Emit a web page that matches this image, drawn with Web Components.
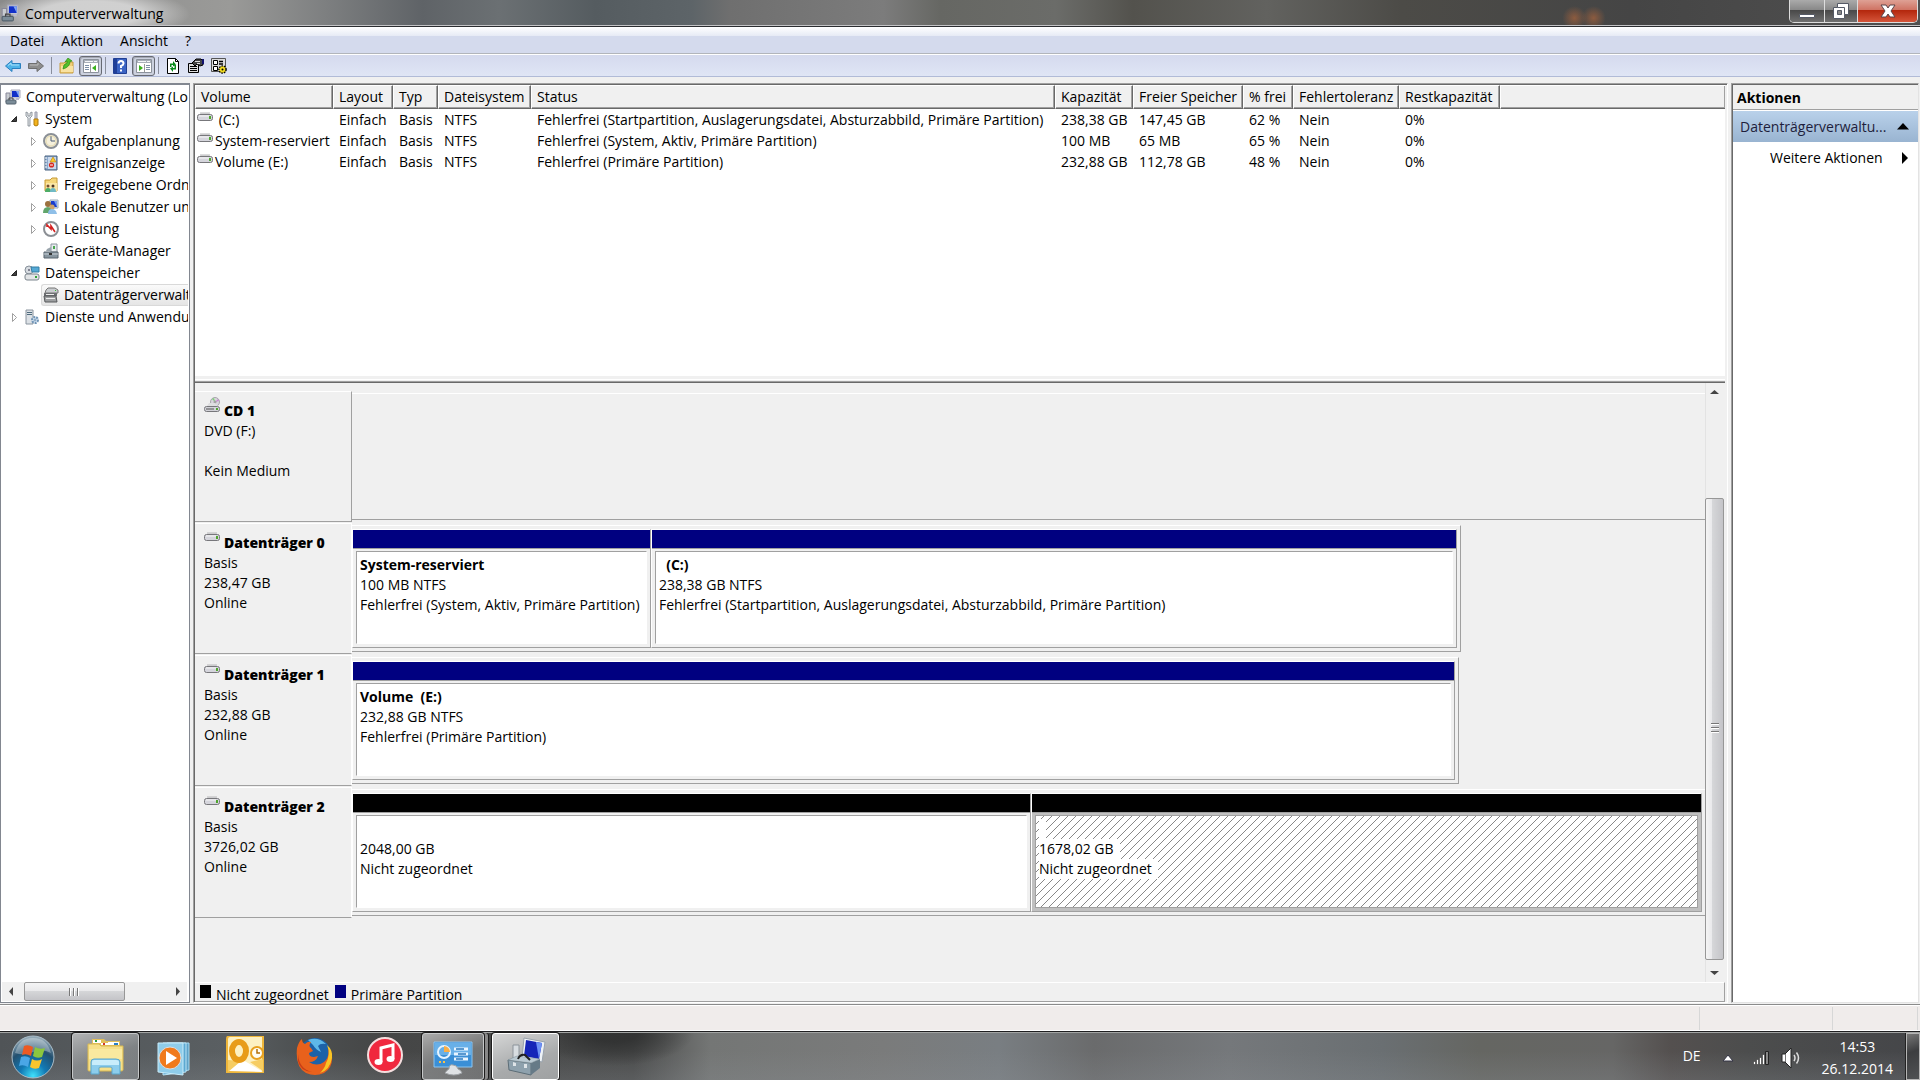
<!DOCTYPE html>
<html lang="de">
<head>
<meta charset="utf-8">
<title>Computerverwaltung</title>
<style>
  html, body {
    margin: 0;
    height: 100%;
  }

  body {
    --face: #f0f0f0;
    --shadow: #a0a0a0;
    --dark: #696969;
    --navy: #000080;
    font: 14px/20px "Open Sans", "Noto Sans", sans-serif;
    color: #000;
  }
</style>
</head>
<body>
<management-console></management-console>

<script>
const ICONS = {
  computer: `<path d="M1 4h4v9H1z" fill="#c8ccd0" stroke="#889"/><path d="M6 1h9v8H6z" fill="#dde3ea" stroke="#aab"/><path d="M7 2h7v6H7z" fill="#1230c8"/><path d="M11 2h3v6z" fill="#7fa4f4"/><rect x="1" y="11" width="10" height="4" rx="1" fill="#7b8c98" stroke="#55636e"/><path d="M4 11V9h4v2" fill="none" stroke="#444"/><path d="M11 9h3v2h-3z" fill="#bbc"/>`,
  tools: `<path d="M2 1v4l2 2v8h2V7l2-2V1L6 2v3H4V2z" fill="#e4e8ec" stroke="#7d878e" stroke-width=".8"/><path d="M11 1h2v7h-2z" fill="#ccd2d8" stroke="#99a"/><path d="M10 8h4v6q-2 2-4 0z" fill="#f2b21c" stroke="#b17c0c"/>`,
  clock: `<circle cx="8" cy="8" r="7" fill="#f5f0dc" stroke="#8b9096" stroke-width="2"/><path d="M8 3v5h4" fill="none" stroke="#4a5c78"/><circle cx="8" cy="8" r="5" fill="none" stroke="#d9c98f" stroke-width=".6"/>`,
  eventlog: `<path d="M2 1h12v14H2z" fill="#8ca9cc" stroke="#46617f"/><path d="M5 2h8v12H5z" fill="#c9d8ec"/><path d="M2 3h2M2 6h2M2 9h2M2 12h2" stroke="#fff"/><path d="m10 2 3 5H7z" fill="#fbc92c" stroke="#b98000" stroke-width=".6"/><circle cx="8.500" cy="10" r="2.600" fill="#d8271c"/><path d="M7 10h3" stroke="#fff"/>`,
  shared: `<path d="M2 3h5l2-2h5v13H2z" fill="#f6d77b" stroke="#c79a35"/><path d="M3 6h11v8H3z" fill="#fbe6a4"/><circle cx="5" cy="9" r="1.500" fill="#795030"/><circle cx="10" cy="9" r="1.500" fill="#4d3524"/><path d="M2 15q0-4 3-4t3 4z" fill="#4dad67"/><path d="M7 15q0-4 3-4t3 4z" fill="#6fb9c4"/>`,
  users: `<path d="M7 1h8v8H7z" fill="#dce4ee" stroke="#9ab"/><path d="M8 2h6v6H8z" fill="#1a3ccc"/><path d="M11 2h3v6z" fill="#779cf0"/><circle cx="5" cy="5" r="3" fill="#9c713f"/><circle cx="9" cy="8" r="2.600" fill="#cda36c"/><path d="M0 14q0-6 5-6 3 0 4 6z" fill="#61a56b"/><path d="M5 15q0-5 4-5t5 5z" fill="#8fbfe8"/>`,
  perf: `<circle cx="8" cy="8" r="7" fill="#fff" stroke="#8b8f94" stroke-width="2"/><path d="M4 6V4l4 4V5l4 6" fill="none" stroke="#d41f1f" stroke-width="1.600"/>`,
  device: `<path d="M8 1h6v8H8z" fill="#e7ebef" stroke="#8a949d"/><path d="M10 3h2v3h-2z" fill="#47a64b"/><path d="m4 6 4-2v4H3z" fill="#9aa5ad"/><path d="M1 9h14v6H1z" fill="#87959f" stroke="#59656e"/><path d="M1 11h14" stroke="#c8d0d6"/><path d="M6 10h3v2H6z" fill="#333"/>`,
  storage: `<circle cx="5" cy="5" r="4" fill="#d7dce1" stroke="#87909a"/><circle cx="5" cy="5" r="1" fill="#667"/><path d="M7 2h8v5H8z" fill="#55a9d5" stroke="#357ea6"/><rect x="1" y="9" width="14" height="6" rx="2" fill="#e3e5e7" stroke="#7c858d"/><path d="M11 11h2v2h-2z" fill="#31a336"/>`,
  diskmgmt: `<path d="m3 3 2-2h7l3 2v3H2z" fill="#c9cccf" stroke="#777"/><path d="M1 6h13v3H1z" fill="#6d6f72"/><path d="M3 7.500h8" stroke="#eee"/><path d="M1 9h12l1 6H2z" fill="#9d9fa1" stroke="#56585a"/><path d="M3 11.500h9" stroke="#eee"/><path d="M12 3h1v1h-1z" fill="#3b3"/>`,
  services: `<path d="M2 1h7v14H2z" fill="#dce1e6" stroke="#8a949e"/><path d="M3 3.500h5M3 5.500h5" stroke="#4e6a7c"/><circle cx="11" cy="11" r="3" fill="#d7e6f4" stroke="#6f93b5" stroke-width="2" stroke-dasharray="2 1"/><circle cx="11" cy="11" r="1" fill="#fff" stroke="#6f93b5"/>`,
  drive: `<path d="m3 5 1-1h8l1 1 2 3H1z" fill="#dedee0"/><path d="M3 4h10" stroke="#b9b9bb"/><rect x="0.500" y="5.500" width="15" height="6" rx="2" fill="#d5d5dc" stroke="#77777b"/><path d="M2 7h10" stroke="#f8f8f8"/><path d="M12 7h2v3h-2z" fill="#4fa52e"/>`,
  cdrom: `<circle cx="11" cy="5" r="4.500" fill="#d9d5dd" stroke="#a7a4ab"/><path d="m11 5-3-3 2-1z" fill="#7dd276"/><path d="m11 5 3-3 1 2z" fill="#c887d0"/><circle cx="11" cy="5" r="1" fill="#fff" stroke="#888"/><path d="m3 9 2-3h6l3 3z" fill="#dedee0"/><rect x="0.500" y="9.500" width="15" height="5" rx="2" fill="#d2d2d8" stroke="#77777b"/><path d="M2 12h8" stroke="#555"/><path d="M12 11h2v2h-2z" fill="#4fa52e"/>`,
  back: `<path d="M0.500 8 7 2.500v3h8.500v5H7v3z" fill="#4fb3e8" stroke="#2a7fbf"/><path d="M3 7.500 6 5v2h8" fill="none" stroke="#a9e0fa"/>`,
  forward: `<path d="M15.500 8 9 2.500v3H.5v5H9v3z" fill="#8d8d8d" stroke="#6e6e6e"/><path d="M2 7h8V5" fill="none" stroke="#bbb"/>`,
  upfolder: `<path d="M1 5h4l1-1h8v11H1z" fill="#f1cf7a" stroke="#c69c3e"/><path d="M2 8h12v6H2z" fill="#f9e2a0"/><path d="M4 11q0-5 4-6V3l-2 1 3-4 4 3-2 .5Q11 9 4 11z" fill="#53c02c" stroke="#2e8d16" stroke-width=".7"/>`,
  paneleft: `<path d="M.5 1.500h15v13H.5z" fill="#fff" stroke="#8c929c"/><path d="M1 2h14v3H1z" fill="#a9afb9"/><path d="M2 3.500h8M11 3.500h3" stroke="#f4f6fa"/><path d="M7.500 6v8" stroke="#999"/><path d="M2 7.500h4M2 9.500h4M2 11.500h4" stroke="#7d8fa8"/><path d="M13 7v6l-4-3z" fill="#3bb11e"/>`,
  paneright: `<path d="M.5 1.500h15v13H.5z" fill="#fff" stroke="#8c929c"/><path d="M1 2h14v3H1z" fill="#a9afb9"/><path d="M2 3.500h8M11 3.500h3" stroke="#f4f6fa"/><path d="M8.500 6v8" stroke="#999"/><path d="M10 7.500h4M10 9.500h4M10 11.500h4" stroke="#7d8fa8"/><path d="M3 7v6l4-3z" fill="#3bb11e"/>`,
  help: `<path d="M1.500.5h13v15h-13z" fill="#3a63c4" stroke="#213f93"/><path d="M2 1h3v14H2z" fill="#203f98"/><path d="M6.500 5.500Q6.500 3 9 3t2.500 2.500Q11.500 7 9 8v2" fill="none" stroke="#fff" stroke-width="2"/><path d="M8 11.500h2v2H8z" fill="#fff"/>`,
  refresh: `<path d="M2.500.5h8l3 3v12h-11z" fill="#fff" stroke="#000"/><path d="M10.500.5v3h3" fill="none" stroke="#000"/><path d="M5 9V5.500h3V3l3 3.500-3 2V7H6.500v2zM11 7v4.500H8V14l-3-3.500 3-2V10h1.500V7z" fill="#0a8a1c"/>`,
  props: `<path d="M.5 5.500h10v9H.5z" fill="#ddd" stroke="#000"/><path d="M2 8.500h7M2 10.500h7M2 12.500h7" stroke="#000"/><path d="M4 5l4-4h5l2 2v4l-3 1-3-2-2 2z" fill="#444" stroke="#000"/><path d="M7 3.500h5M9 5.500h3" stroke="#ddd"/><path d="M14 1h2v5h-2z" fill="#11116f"/>`,
  settings: `<path d="M.5.500h14v13H.5z" fill="#ddd" stroke="#555"/><path d="M2.500 2.500h4v4h-4zM2.500 8.500h4v4h-4z" fill="#fff" stroke="#000"/><path d="M8 3.500h4M8 6h4" stroke="#000" stroke-width="1.500"/><circle cx="11.500" cy="11.500" r="3.500" fill="#f3dc20" stroke="#000" stroke-width="1.600" stroke-dasharray="1.500 1"/><circle cx="11.500" cy="11.500" r="2.700" fill="#f3dc20"/><circle cx="11.500" cy="11.500" r="1" fill="#000"/>`
};

const BIG_ICONS = {
  explorer: `<path d="M6 6V3h12l2 2h14v30H6z" fill="#e2c05a"/><path d="M7 4h8v3H7zM22 6h11v3H22z" fill="#fff"/><path d="M9 4h2v2H9z" fill="#2b9c40"/><path d="M15 7h9v2h-9z" fill="#fff"/><path d="M17 7h2v2h-2z" fill="#d2372b"/><path d="M28 7h4v2h-4z" fill="#2b80c8"/><path d="M2 8h11l2 2h22v24q0 1-2 1H3q-1 0-1-1z" fill="#f6e08a" stroke="#d8b850"/><path d="M3 13h33v10H3z" fill="#fcefae" opacity=".6"/><path d="M5 38V26q0-3 3-3h22q4 0 4 3v12h-8v-6q0-1-2-1h-9q-2 0-2 1v6z" fill="#8ccdec" stroke="#5ba7cd"/><path d="M6 29v-3q0-2 2-2h22q3 0 3 2v3z" fill="#c8edfb"/>`,
  media: `<path d="M11 7h22v27l-22 4z" fill="#5fa3c8" stroke="#a9dbf1"/><path d="M7 7h23v29l-23 3z" fill="#5ca9d2" stroke="#bce4f5"/><path d="M2 7h25v32L2 36z" fill="#8fcdea" stroke="#c9ecfa"/><circle cx="14" cy="22" r="11" fill="#f07a1c" stroke="#d9dfe5"/><path d="m10 15 11 7-11 7z" fill="#fff"/>`,
  outlook: `<path d="M1 3q0-3 3-3h33v36H1z" fill="#fdf1c2" stroke="#eeb63a" stroke-width="2"/><path d="M2 35 17 24l20 12z" fill="#fff"/><path d="M2 24v12l13-11zM37 23v12L24 26z" fill="#f6cd62"/><ellipse cx="13" cy="15" rx="7" ry="9" fill="none" stroke="#e89c18" stroke-width="6"/><circle cx="31" cy="17" r="6" fill="#fffdf3" stroke="#e8a11f" stroke-width="2"/><path d="M31 13v4h3" fill="none" stroke="#b36f0a" stroke-width="1.500"/>`,
  firefox: `<g transform="translate(-2 0)"><circle cx="21" cy="18" r="16" fill="#1c62a8"/><path d="M14 4q10-4 18 4-6-1-8 2l3 6q-5-2-8-7z" fill="#5eb8e8"/><path d="M3 12q2-7 5-9 0 4 3 5 3-3 6-2-3 4 0 6l2 3-4 2q0 4 5 4l4-1q-2 6-9 6 8 5 15 0 6-5 4-15 3 3 4 9 1 12-8 17-9 4-18 0Q1 31 3 12z" fill="#e8611c"/><path d="M33 9q6 5 5 13-2 12-12 15 5-5 6-10 5-9 1-18z" fill="#f9c424"/><path d="M4 18q1 15 14 18-12-1-14-11z" fill="#c93d16"/></g>`,
  itunes: `<circle cx="19" cy="19" r="17" fill="#f0283e" stroke="#f4dede" stroke-width="2"/><path d="M15 26V12l12-3v14" fill="none" stroke="#fff" stroke-width="3"/><ellipse cx="12.500" cy="26" rx="4" ry="3" fill="#fff"/><ellipse cx="24.500" cy="23" rx="4" ry="3" fill="#fff"/>`,
  control: `<path d="M1 6h38v25H1z" fill="#3b8fd6" stroke="#8cc4ef"/><path d="M2 7h36v12H2z" fill="#68b0e8"/><circle cx="11" cy="16" r="6" fill="none" stroke="#e6f4ff" stroke-width="2"/><path d="M11 16v-6a6 6 0 0 1 6 6z" fill="#f8ae48"/><path d="M21 13h14M21 18h14M21 23h14" stroke="#eaf6ff" stroke-width="3"/><path d="M23 13h8M25 18h8M23 23h7" stroke="#2a7ac0" stroke-width="1.500"/><path d="M6 25h2v2H6zM10 25h2v2h-2z" fill="#f8c04b"/><path d="M12 37q2-3 4-4 0-5 4-4 4 0 5 4 3 1 4 4-8 4-17 0z" fill="#dfe2e5" stroke="#a0a4a8"/>`,
  compmgmt: `<path d="M7 9h6v16H7z" fill="#d8dde1" stroke="#8c949b"/><path d="m18 2 21 4-3 20-20-4z" fill="#eef2f6" stroke="#98a2ac"/><path d="m20 4 16 3-3 16-15-3z" fill="#1525b8"/><path d="m30 6 6 1-3 16z" fill="#6c92f5"/><path d="m2 24 23 3v12L3 34z" fill="#8ea1ad" stroke="#5c6d77"/><path d="m25 27 9-4v9l-9 7z" fill="#667a87"/><path d="m2 24 9-4 23 3-9 4z" fill="#bac9d2" stroke="#7b8b95" stroke-width=".5"/><path d="M12 23q2-5 7-4l5 5" fill="none" stroke="#222" stroke-width="2"/><path d="M7 26v4h3v-3zM18 28v4h3v-4z" fill="#dee4e8"/>`
};

// Shared base: every element clones its own template into an open root.
class BaseElement extends HTMLElement {
  constructor() {
    super();
    const template = document.createElement("template");
    template.innerHTML = this.constructor.markup;
    this.attachShadow({ mode: "open" });
    this.shadowRoot.appendChild(template.content.cloneNode(true));
  }

  $(selector) {
    return this.shadowRoot.querySelector(selector);
  }
}

class UiIcon extends BaseElement {
  static markup = `<style>
    :host { display: block; flex: none; width: 16px; height: 16px; white-space: normal; }
    :host([big]) { width: 40px; height: 40px; }
    svg { display: block; width: 100%; height: 100%; }
  </style>
  <svg aria-hidden="true"></svg>`;

  static get observedAttributes() {
    return ["name"];
  }

  attributeChangedCallback(attr, oldValue, newValue) {
    const big = this.hasAttribute("big");
    const svg = this.$("svg");
    svg.setAttribute("viewBox", big ? "0 0 40 40" : "0 0 16 16");
    svg.innerHTML = (big ? BIG_ICONS : ICONS)[newValue];
  }
}

class TitleBar extends BaseElement {
  static markup = `<style>
    :host {
      display: flex;
      align-items: center;
      height: 27px;
      box-sizing: border-box;
      padding-left: 1px;
      border-bottom: 1px solid #2a2c30;
      box-shadow: inset 0 -1px #c4c4c6;
      background:
        radial-gradient(ellipse 100px 26px at 90px 14px, rgba(215, 215, 215, 0.9) 50%, transparent),
        radial-gradient(ellipse 12px 12px at 82% 18px, rgba(170, 100, 60, 0.7), transparent),
        radial-gradient(ellipse 12px 12px at 83% 18px, rgba(170, 100, 60, 0.7), transparent),
        linear-gradient(90deg, #8a8a8a 0, #9a9a98 12%, #7d7f80 17%, #5f6367 22%, #6b7073 26%, #555c60 31%, #5d6468 36%, #6f6f6f 38%, #7c7c7c 46%, #666763 49%, #6b6c69 55%, #53524d 59%, #62625f 66%, #4c4b47 73%, #454545 85%, #505050);
    }
    ui-icon { width: 18px; height: 18px; }
    h1 { flex: 1; margin: 2px 0 0 6px; font: inherit; }
    .buttons {
      display: flex;
      align-self: flex-start;
      margin-right: 2px;
      border: 1px solid #ddd;
      border-top: 0;
      border-radius: 0 0 5px 5px;
      overflow: hidden;
      height: 22px;
    }
    button {
      display: grid;
      place-items: center;
      width: 35px;
      padding: 0;
      border: 0;
      border-right: 1px solid #ddd;
      background: linear-gradient(#aaa 0, #888 45%, #484848 46%, #707070);
    }
    .restore { width: 33px; }
    .close { width: 59px; border: 0; background: linear-gradient(#dea195 0, #cf7363 45%, #b3260c 46%, #d5553a); }
    svg { display: block; }
  </style>
  <ui-icon name="computer"></ui-icon>
  <h1>Computerverwaltung</h1>
  <div class="buttons">
    <button aria-label="Minimieren"><svg width="18" height="18"><path d="M1.500 12.500h15v3h-15z" fill="#fff" stroke="#555a66"/></svg></button>
    <button class="restore" aria-label="Verkleinern"><svg width="18" height="18"><path d="M5.500 1.500h11v11h-4v4h-11v-11h4z" fill="#fff" stroke="#555a66"/><path d="M5.500 5.500h7v7" fill="none" stroke="#555a66"/><path d="M5.500 8.500h4v4h-4z" fill="#888" stroke="#555a66"/></svg></button>
    <button class="close" aria-label="Schließen"><svg width="18" height="18"><path d="M2 3h5l2 3 2-3h5l-4 6 4 6h-5l-2-3-2 3H2l4-6z" fill="#fff" stroke="#5a4448"/></svg></button>
  </div>`;
}

class MenuBar extends BaseElement {
  static markup = `<style>
    :host {
      display: flex;
      gap: 17px;
      padding-left: 10px;
      height: 26px;
      border-bottom: 1px solid #b2b5bb;
      background: linear-gradient(#fff 0, #e6eaf5 9px, #d4daed 9px);
    }
    button { padding: 2px 0 0; border: 0; background: none; font: inherit; }
  </style>
  <button>Datei</button><button>Aktion</button><button>Ansicht</button><button>?</button>`;
}

class ToolBar extends BaseElement {
  static markup = `<style>
    :host {
      display: flex;
      align-items: center;
      gap: 1px;
      padding: 1px 0 0 2px;
      height: 21px;
      border-bottom: 1px solid #b1bbd7;
      background: linear-gradient(#fff 0, #fff 1px, #d5daee 1px, #dfe5f5);
    }
    button { display: grid; place-items: center; width: 22px; height: 20px; padding: 0; border: 0; background: none; }
    .pressed {
      width: 23px;
      box-sizing: border-box;
      border: 1px solid #676a73;
      border-radius: 3px;
      background: #ccd1de;
      box-shadow: inset 1px 1px #a5a9b5;
    }
    i { width: 1px; height: 17px; margin: 0 3px; background: #8a8f9c; }
    .pressed + i { margin: 0 2px; }
  </style>
  <button aria-label="Zurück"><ui-icon name="back"></ui-icon></button>
  <button aria-label="Vorwärts"><ui-icon name="forward"></ui-icon></button>
  <i></i>
  <button aria-label="Nach oben"><ui-icon name="upfolder"></ui-icon></button>
  <button class="pressed" aria-label="Konsolenstruktur"><ui-icon name="paneleft"></ui-icon></button>
  <i></i>
  <button aria-label="Hilfe"><ui-icon name="help"></ui-icon></button>
  <button class="pressed" aria-label="Aktionsbereich"><ui-icon name="paneright"></ui-icon></button>
  <i></i>
  <button aria-label="Aktualisieren"><ui-icon name="refresh"></ui-icon></button>
  <button aria-label="Eigenschaften"><ui-icon name="props"></ui-icon></button>
  <button aria-label="Einstellungen"><ui-icon name="settings"></ui-icon></button>`;
}

class TreeItem extends BaseElement {
  static markup = `<style>
    :host { display: flex; }
    .row { flex: 1; display: flex; align-items: center; height: 22px; white-space: nowrap; }
    .expander { flex: none; width: 19px; height: 16px; }
    :host([root]) .expander { display: none; }
    .label { display: flex; flex: 1; align-items: center; gap: 5px; height: 20px; }
    :host([selected]) .label {
      margin-left: -2px;
      padding-left: 1px;
      border: 1px solid #d9d9d9;
      border-right: 0;
      border-radius: 3px 0 0 3px;
      background: linear-gradient(#fafafa, #e5e5e5);
    }
    path { fill: none; }
    :host([state="open"]) .open { fill: #404040; stroke: #262626; }
    :host([state="closed"]) .closed { fill: #fff; stroke: #a0a0a0; }
  </style>
  <div class="row">
    <svg class="expander" viewBox="0 0 19 16"><path class="open" d="M11.500 5.500v5h-5z"/><path class="closed" d="M7.500 4.500v8l4-4z"/></svg>
    <span class="label"><ui-icon></ui-icon><slot></slot></span>
  </div>`;

  connectedCallback() {
    this.$("ui-icon").setAttribute("name", this.getAttribute("icon"));
    this.style.paddingLeft = (this.getAttribute("depth") || 0) * 19 + "px";
  }
}

class ScrollBar extends BaseElement {
  static markup = `<style>
    :host { display: flex; background: #f0f0f0; }
    :host([vertical]) { flex-direction: column; width: 19px; box-shadow: inset 1px 0 #e3e3e3; }
    :host(:not([vertical])) { height: 19px; }
    button { display: grid; place-items: center; flex: none; width: 19px; height: 19px; padding: 0; border: 0; background: none; }
    .track { flex: 1; display: flex; }
    .lead { flex: var(--lead, 0); }
    .tail { flex: var(--tail, 1); }
    :host([vertical]) .track { flex-direction: column; }
    .thumb {
      flex: var(--thumb, 1);
      box-sizing: border-box;
      display: grid;
      place-items: center;
      border: 1px solid #979797;
      border-radius: 2px;
      background: linear-gradient(#f5f5f5, #e9e9eb 45%, #d6d7d9 46%, #c4c4c8);
    }
    :host([vertical]) .thumb { background: linear-gradient(90deg, #f5f5f5, #e9e9eb 35%, #d6d7d9 36%, #c4c4c8); }
    .grip { width: 11px; height: 8px; background: repeating-linear-gradient(90deg, #777 0 1px, #fff 1px 2px, transparent 2px 4px); }
    :host([vertical]) .grip { width: 8px; height: 11px; background: repeating-linear-gradient(#777 0 1px, #fff 1px 2px, transparent 2px 4px); }
    svg { display: block; fill: #444; }
    :host([vertical]) svg { transform: rotate(90deg); }
  </style>
  <button aria-label="Zurückblättern"><svg width="9" height="9"><path d="M6 0v9L2 4.500z"/></svg></button>
  <div class="track"><div class="lead"></div><div class="thumb"><div class="grip"></div></div><div class="tail"></div></div>
  <button aria-label="Weiterblättern"><svg width="9" height="9"><path d="M3 0v9l4-4.500z"/></svg></button>`;
}

class NavTree extends BaseElement {
  static markup = `<style>
    :host { display: flex; flex-direction: column; border: 1px solid #828790; border-top-width: 2px; background: #fff; min-width: 0; }
    nav { flex: 1; overflow: hidden; margin-right: 1px; padding: 1px 0 0 4px; }
    scroll-bar { --lead: 3; --thumb: 101; --tail: 44; margin: 0 2px 1px 1px; }
  </style>
  <nav><slot></slot></nav>
  <scroll-bar></scroll-bar>`;
}

class VolumeTable extends BaseElement {
  static columns = [
    ["Volume", 138], ["Layout", 60], ["Typ", 45], ["Dateisystem", 93], ["Status", 524],
    ["Kapazität", 78], ["Freier Speicher", 110], ["% frei", 50], ["Fehlertoleranz", 106], ["Restkapazität", 101]
  ];

  static rows = [
    [" (C:)", "Einfach", "Basis", "NTFS", "Fehlerfrei (Startpartition, Auslagerungsdatei, Absturzabbild, Primäre Partition)", "238,38 GB", "147,45 GB", "62 %", "Nein", "0%"],
    ["System-reserviert", "Einfach", "Basis", "NTFS", "Fehlerfrei (System, Aktiv, Primäre Partition)", "100 MB", "65 MB", "65 %", "Nein", "0%"],
    ["Volume (E:)", "Einfach", "Basis", "NTFS", "Fehlerfrei (Primäre Partition)", "232,88 GB", "112,78 GB", "48 %", "Nein", "0%"]
  ];

  static markup = `<style>
    :host { display: block; background: #fff; overflow: hidden; }
    table { width: 100%; table-layout: fixed; border-collapse: separate; border-spacing: 0; }
    th, td { padding: 0 0 0 6px; text-align: left; font-weight: normal; white-space: pre; }
    th {
      box-sizing: border-box;
      height: 24px;
      background: var(--face);
      border: 1px solid var(--dark);
      border-top-color: #fff;
      border-left-color: #fff;
      padding-left: 5px;
      box-shadow: inset -1px -1px var(--shadow);
    }
    th:last-child { border-right: 0; }
    td { height: 21px; line-height: 21px; }
    td:first-child { padding-left: 2px; }
    .name { display: flex; gap: 2px; }
  </style>
  <table><colgroup></colgroup><thead><tr></tr></thead><tbody></tbody></table>`;

  connectedCallback() {
    const { columns, rows } = VolumeTable;
    this.$("colgroup").innerHTML = columns.map(([, w]) => `<col style="width:${w}px">`).join("") + "<col>";
    this.$("thead tr").innerHTML = columns.map(([name]) => `<th scope="col">${name}</th>`).join("") + "<th></th>";
    this.$("tbody").innerHTML = rows
      .map(([name, ...cells]) => `<tr><td><span class="name"><ui-icon name="drive"></ui-icon>${name}</span></td>${cells.map((c) => `<td>${c}</td>`).join("")}<td></td></tr>`)
      .join("");
  }
}

class DiskPartition extends BaseElement {
  static markup = `<style>
    :host {
      display: flex;
      flex-direction: column;
      min-width: 0;
      border: 1px solid var(--shadow);
      border-top-color: #fff;
      border-left-color: #fff;
    }
    .bar { height: 18px; background: var(--navy); border-bottom: 1px solid var(--shadow); }
    :host([free]) .bar { background: #000; }
    .frame { flex: 1; padding: 2px 3px 3px; }
    .box {
      box-sizing: border-box;
      height: 93px;
      padding: 3px;
      border: 1px solid #fff;
      border-top-color: var(--shadow);
      border-left-color: var(--shadow);
      background: #fff;
      overflow: hidden;
      white-space: pre;
    }
    span { display: block; width: fit-content; height: 20px; }
    .title { font-weight: bold; min-width: 7px; }
    :host([selected]) .frame { background: #c0c0c0; }
    :host([selected]) .box { border-color: var(--shadow); background: linear-gradient(135deg, transparent 46%, #888 46% 54%, transparent 54%) 0 0 / 8px 8px #fff; }
    :host([selected]) span { background: #fff; padding-right: 6px; }
    :host([selected]) .title { padding: 0; }
  </style>
  <div class="bar"></div>
  <div class="frame"><div class="box"><span class="title"></span><span class="size"></span><span class="status"></span></div></div>`;

  connectedCallback() {
    this.style.flex = `${this.getAttribute("weight")} 1 0`;
    for (const part of ["title", "size", "status"]) {
      this.$("." + part).textContent = this.dataset[part] || "";
    }
  }
}

class DiskRow extends BaseElement {
  static markup = `<style>
    :host { display: flex; height: 132px; }
    .info {
      flex: none;
      box-sizing: border-box;
      width: 157px;
      height: 131px;
      padding: 9px 0 0 9px;
      border-top: 1px solid #fff;
      border-bottom: 1px solid var(--shadow);
      border-right: 1px solid #fff;
    }
    .name { display: flex; gap: 4px; font-weight: bold; white-space: nowrap; }
    .name ui-icon { margin-top: -4px; }
    .body { flex: 1; display: grid; grid-template-columns: 1fr; margin-top: 2px; height: 127px; }
    .parts { box-sizing: border-box; display: flex; min-width: 0; height: 127px; padding: 3px 3px 3px 0; border: 1px solid var(--shadow); border-left: 0; border-top-color: #fff; }
    :host([empty]) .parts, :host([full]) .parts { border-right: 0; }
    :host([empty]) .info { border-right-color: var(--shadow); }
  </style>
  <div class="info"><div class="name"><ui-icon></ui-icon><b></b></div><slot name="info"></slot></div>
  <div class="body"><div class="parts"><slot></slot></div></div>`;

  connectedCallback() {
    this.$("ui-icon").setAttribute("name", this.getAttribute("icon") || "drive");
    this.$("b").textContent = this.getAttribute("name");
    const used = Number(this.getAttribute("span") || 1353);
    this.$(".body").style.gridTemplateColumns = `${used}fr ${1353 - used}fr`;
  }
}

class DiskLegend extends BaseElement {
  static markup = `<style>
    :host {
      display: flex;
      gap: 6px;
      height: 18px;
      padding-left: 5px;
      border: 1px solid var(--shadow);
      border-top-color: #fff;
      border-left: 0;
    }
    span { display: flex; gap: 5px; line-height: 24px; }
    span::before { content: ""; width: 11px; height: 13px; margin-top: 2px; background: #000; }
    .primary::before { background: var(--navy); }
  </style>
  <span>Nicht zugeordnet</span><span class="primary">Primäre Partition</span>`;
}

class DiskView extends BaseElement {
  static markup = `<style>
    :host { display: flex; flex-direction: column; background: var(--face); border: 1px solid var(--shadow); border-right-color: #fff; border-bottom-color: #fff; box-shadow: inset 1px 1px var(--dark); padding: 1px 2px 0 1px; min-width: 0; }
    volume-table { flex: 0 0 291px; }
    .splitter { height: 3px; margin-top: 3px; border-bottom: 1px solid var(--dark); box-shadow: inset 0 1px #fff, inset 0 -1px var(--shadow); }
    .disks { flex: 1; display: flex; }
    .list { flex: 1; padding-top: 8px; min-width: 0; }
    scroll-bar { --lead: 96; --thumb: 461; --tail: 3; margin-right: 1px; }
  </style>
  <volume-table></volume-table>
  <div class="splitter"></div>
  <div class="disks"><div class="list"><slot></slot></div><scroll-bar vertical></scroll-bar></div>
  <disk-legend></disk-legend>`;
}

class ActionsPane extends BaseElement {
  static markup = `<style>
    :host { display: block; background: #fff; border: 1px solid var(--shadow); border-right-color: #e3e3e3; border-bottom-color: #e3e3e3; box-shadow: inset 1px 1px var(--dark); padding: 1px 0 0 1px; }
    h2 { margin: 0; padding: 2px 0 0 4px; font-size: 14px; line-height: 22px; background: var(--face); border-bottom: 1px solid var(--shadow); }
    button { display: flex; align-items: center; justify-content: space-between; width: 100%; height: 31px; padding: 0 9px 0 7px; border: 0; background: none; font: inherit; }
    .group { margin-top: 1px; background: linear-gradient(#b9d1ea, #99b4d1); color: #1e1e3c; }
    .item { padding-left: 37px; }
  </style>
  <h2>Aktionen</h2>
  <button class="group">Datenträgerverwaltu...<svg width="12" height="7"><path d="M0 6.500 6 0l6 6.500z"/></svg></button>
  <button class="item">Weitere Aktionen<svg width="8" height="12"><path d="M1 0l6 6-6 6z"/></svg></button>`;
}

class StatusBar extends BaseElement {
  static markup = `<style>
    :host { display: flex; height: 23px; padding: 2px 2px 0 0; border-top: 1px solid #8b8b8b; border-bottom: 1px solid #fff; background: #f0eceb; box-shadow: inset 0 1px #fff; }
    span { border-right: 1px solid #d7d7d7; }
    .message { flex: 1; }
    .middle { width: 132px; }
    .right { width: 84px; }
  </style>
  <span class="message"></span><span class="middle"></span><span class="right"></span>`;
}

class TaskButton extends BaseElement {
  static markup = `<style>
    :host { display: flex; width: 67px; }
    button { flex: 1; display: grid; place-items: center; box-sizing: border-box; padding: 0 0 1px; border: 1px solid transparent; border-radius: 3px; background: none; }
    :host([open]) button { border-color: #c6c8c9; box-shadow: 0 0 0 1px #1c1c1c; background: linear-gradient(160deg, rgba(255, 255, 255, 0.55), rgba(255, 255, 255, 0.25) 50%, rgba(255, 255, 255, 0.15)); }
    :host([active]) button { border-color: #fff; background: linear-gradient(160deg, #d5d6d6, #a8aaab 60%, #9fa1a2); }
    :host([stacked]) button { margin-right: 5px; box-shadow: 0 0 0 1px #1c1c1c, 4px 0 0 #888, 5px 0 0 #1c1c1c; }
  </style>
  <button><ui-icon big></ui-icon></button>`;

  connectedCallback() {
    this.$("ui-icon").setAttribute("name", this.getAttribute("icon"));
    this.$("button").setAttribute("aria-label", this.getAttribute("label"));
  }
}

class TaskBar extends BaseElement {
  static markup = `<style>
    :host {
      display: flex;
      align-items: stretch;
      height: 47px;
      border-top: 1px solid #1f1f21;
      box-shadow: inset 0 1px #a2a4a3;
      padding-top: 1px;
      color: #fff;
      background:
        radial-gradient(ellipse 80px 34px at 32% 0, rgba(45, 46, 46, 0.8) 30%, transparent),
        linear-gradient(transparent 40%, rgba(140, 145, 150, 0.25)),
        linear-gradient(90deg, #505457 0, #5a5f62 12%, #4c4f50 16%, #454646 20%, #4a4b4b 33%, #747675 37%, #7a7b7b 46%, #797e82 52%, #6a6b6c 57%, #75787b 64%, #6a6f72 72%, #656662 77%, #666665 84%, #54504f 87%, #4c4d4d 91%, #454649 100%);
    }
    .start { width: 65px; margin-right: 7px; padding: 0; border: 0; background: none; display: grid; place-items: center; }
    .apps { display: flex; flex: 1; gap: 3px; }
    .tray { display: flex; align-items: center; gap: 12px; padding-top: 2px; margin-right: 13px; }
    .tray svg { display: block; }
    .lang { margin: 0 9px 4px 0; }
    .more { margin-right: 7px; }
    time { text-align: center; line-height: 22px; margin-left: 9px; }
    .desktop { width: 14px; padding: 0; border: 1px solid #b5b5b5; background: linear-gradient(160deg, #777, #3d3e40 40%, #505254); box-shadow: -1px 0 #222; }
  </style>
  <button class="start" aria-label="Start">
    <svg width="46" height="46" viewBox="0 0 46 46">
      <defs><radialGradient id="orb" cx=".5" cy=".95" r=".9"><stop offset="0" stop-color="#3fe0fb"/><stop offset=".35" stop-color="#1279b4"/><stop offset=".7" stop-color="#24506f"/><stop offset="1" stop-color="#8fa7b5"/></radialGradient></defs>
      <circle cx="23" cy="23" r="21" fill="url(#orb)" stroke="#a9bcc8"/>
      <path d="M5 19Q9 4 23 4t18 15q-9-5-18-1T5 19z" fill="#fff" opacity=".3"/>
      <path d="M14 12q4-2 9 1l-2 9q-5-3-9-1z" fill="#ec5a23"/>
      <path d="M25 13q5 3 10 1l-3 9q-5 2-9-1z" fill="#8cc63e"/>
      <path d="M11 23q5-2 9 1l-2 9q-5-3-9-1z" fill="#4aa6e6"/>
      <path d="M22 25q5 3 10 0l-3 9q-5 2-9-1z" fill="#fbc52c"/>
    </svg>
  </button>
  <div class="apps">
    <task-button icon="explorer" label="Windows-Explorer" open></task-button>
    <task-button icon="media" label="Media Player"></task-button>
    <task-button icon="outlook" label="Outlook"></task-button>
    <task-button icon="firefox" label="Firefox"></task-button>
    <task-button icon="itunes" label="iTunes"></task-button>
    <task-button icon="control" label="Systemsteuerung" open stacked></task-button>
    <task-button icon="compmgmt" label="Computerverwaltung" open active></task-button>
  </div>
  <div class="tray">
    <span class="lang">DE</span>
    <svg class="more" width="12" height="8"><path d="M1 7 6 1l5 6z" fill="#fff" stroke="#334"/></svg>
    <svg width="16" height="14"><path d="M.5 10.500h2v3h-2zM3.500 8.500h2v5h-2zM6.500 6.500h2v7h-2zM9.500 3.500h2v10h-2z" fill="#fff" stroke="#222" stroke-width=".5"/><path d="M12.500.5h3v13h-3z" fill="#888" stroke="#222"/></svg>
    <svg width="20" height="20"><path d="M1 6h3l6-6v20l-6-6H1z" fill="#fff" stroke="#222"/><path d="M4.500 6v8" stroke="#777"/><path d="M13 7q2 3 0 6M15.500 4.500q4 5.500 0 11" fill="none" stroke="#ddd" stroke-width="1.500"/></svg>
    <time>14:53<br>26.12.2014</time>
  </div>
  <button class="desktop" aria-label="Desktop anzeigen"></button>`;
}

class ManagementConsole extends BaseElement {
  static markup = `<style>
    :host { display: flex; flex-direction: column; min-height: 100vh; background: var(--face); }
    main { flex: 1; display: grid; grid-template-columns: 190px minmax(0, 1fr) 188px; gap: 3px; padding: 6px 1px 1px 0; }
  </style>
  <title-bar></title-bar>
  <menu-bar></menu-bar>
  <tool-bar></tool-bar>
  <main>
    <nav-tree>
      <tree-item root icon="computer">Computerverwaltung (Lo</tree-item>
      <tree-item state="open" icon="tools">System</tree-item>
      <tree-item depth="1" state="closed" icon="clock">Aufgabenplanung</tree-item>
      <tree-item depth="1" state="closed" icon="eventlog">Ereignisanzeige</tree-item>
      <tree-item depth="1" state="closed" icon="shared">Freigegebene Ordn</tree-item>
      <tree-item depth="1" state="closed" icon="users">Lokale Benutzer un</tree-item>
      <tree-item depth="1" state="closed" icon="perf">Leistung</tree-item>
      <tree-item depth="1" icon="device">Geräte-Manager</tree-item>
      <tree-item state="open" icon="storage">Datenspeicher</tree-item>
      <tree-item depth="1" selected icon="diskmgmt">Datenträgerverwalt</tree-item>
      <tree-item state="closed" icon="services">Dienste und Anwendu</tree-item>
    </nav-tree>
    <disk-view>
      <disk-row empty icon="cdrom" name="CD 1">
        <div slot="info">DVD (F:)<br><br>Kein Medium</div>
      </disk-row>
      <disk-row name="Datenträger 0" span="1109">
        <div slot="info">Basis<br>238,47 GB<br>Online</div>
        <disk-partition weight="298" data-title="System-reserviert" data-size="100 MB NTFS" data-status="Fehlerfrei (System, Aktiv, Primäre Partition)"></disk-partition>
        <disk-partition weight="807" data-title="  (C:)" data-size="238,38 GB NTFS" data-status="Fehlerfrei (Startpartition, Auslagerungsdatei, Absturzabbild, Primäre Partition)"></disk-partition>
      </disk-row>
      <disk-row name="Datenträger 1" span="1107">
        <div slot="info">Basis<br>232,88 GB<br>Online</div>
        <disk-partition weight="1" data-title="Volume  (E:)" data-size="232,88 GB NTFS" data-status="Fehlerfrei (Primäre Partition)"></disk-partition>
      </disk-row>
      <disk-row name="Datenträger 2" full>
        <div slot="info">Basis<br>3726,02 GB<br>Online</div>
        <disk-partition free weight="679" data-size="2048,00 GB" data-status="Nicht zugeordnet"></disk-partition>
        <disk-partition free selected weight="671" data-size="1678,02 GB" data-status="Nicht zugeordnet"></disk-partition>
      </disk-row>
    </disk-view>
    <actions-pane></actions-pane>
  </main>
  <status-bar></status-bar>
  <task-bar></task-bar>`;
}

const ELEMENTS = {
  "ui-icon": UiIcon,
  "title-bar": TitleBar,
  "menu-bar": MenuBar,
  "tool-bar": ToolBar,
  "tree-item": TreeItem,
  "scroll-bar": ScrollBar,
  "nav-tree": NavTree,
  "volume-table": VolumeTable,
  "disk-partition": DiskPartition,
  "disk-row": DiskRow,
  "disk-legend": DiskLegend,
  "disk-view": DiskView,
  "actions-pane": ActionsPane,
  "status-bar": StatusBar,
  "task-button": TaskButton,
  "task-bar": TaskBar,
  "management-console": ManagementConsole
};

Object.entries(ELEMENTS).forEach(([tag, element]) => customElements.define(tag, element));
</script>
</body>
</html>
